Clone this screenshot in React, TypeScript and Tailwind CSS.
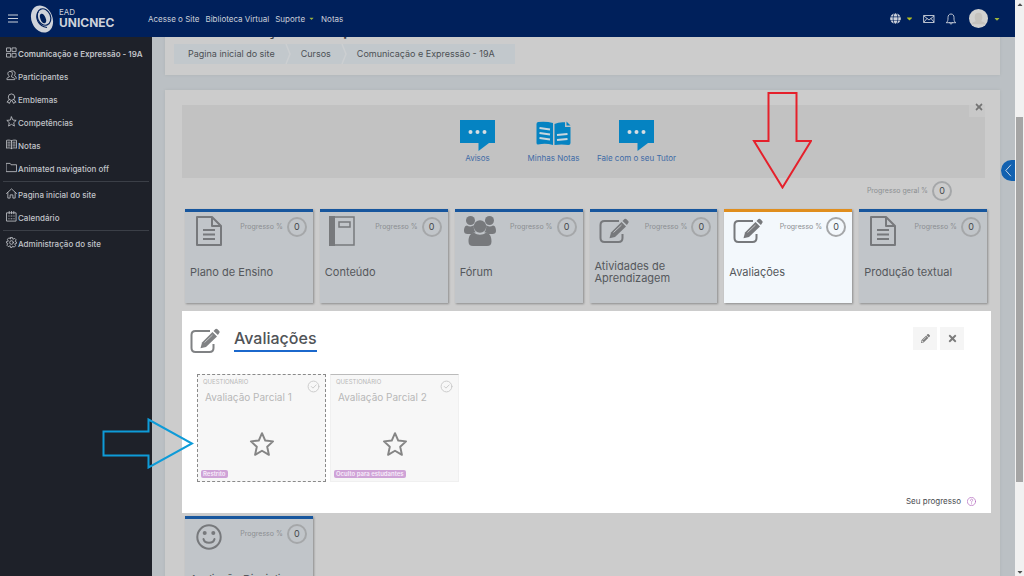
import type { ReactNode } from "react";
import { FaCaretDown, FaGlobe, FaPencilAlt, FaTimes } from "react-icons/fa";

// ================================
// Icons
// ================================

interface IconProps {
  className?: string;
  children: ReactNode;
}

function LineIcon({ className = "size-3", children }: IconProps) {
  return (
    <svg
      viewBox="0 0 24 24"
      className={`${className} shrink-0`}
      fill="none"
      stroke="currentColor"
      strokeWidth="1.8"
      strokeLinejoin="round"
      strokeLinecap="round"
      aria-hidden="true"
    >
      {children}
    </svg>
  );
}

const STAR = "M12 2l3 6.8 7.2.8-5.4 5 1.6 7.4-6.4-3.8L5.6 22l1.6-7.4-5.4-5L9 8.800z";

const sideIcons: Record<string, ReactNode> = {
  grid: <path d="M2 2h8v8H2zM14 2h8v8h-8zM2 14h8v8H2zM14 14h8v8h-8z" />,
  users: (
    <path d="M9 3c3 0 5 2 5 5 0 2-1 4-2 5v2l5 2c1 1 2 2 2 4H2c0-2 0-3 1-4l4-2v-2C5 12 4 10 4 8c0-3 2-5 5-5zM12 2c4-1 8 1 8 5 0 2-1 4-2 5l4 3v4" />
  ),
  badge: (
    <>
      <circle cx="12" cy="9" r="7" />
      <path d="M7 14l-5 6 4 0 1 3 4-6M17 14l5 6-4 0-1 3-4-6" />
    </>
  ),
  star: <path d={STAR} />,
  book: (
    <path d="M12 4C9 2 5 2 1 3v17c4-1 8-1 11 1 3-2 7-2 11-1V3c-4-1-8-1-11 1zM12 4v17M4 7h5M4 11h5M4 15h5M15 7h5M15 11h5M15 15h5" />
  ),
  folder: <path d="M1 3h8l2 3h12v15H1z" />,
  home: <path d="M1 12L12 2l11 10M4 10v12h5v-7h6v7h5V10" />,
  calendar: <path d="M2 4h20v18H2zM7 1v5M12 1v5M17 1v5M6 11h1M11 11h2M17 11h1M6 17h1M11 17h2M17 17h1" />,
  gear: (
    <>
      <circle cx="12" cy="12" r="4" />
      <path d="M10 1h4l1 4 4-2 3 3-2 4 3 1v3l-4 1 2 4-3 3-4-2-1 3h-3l-1-4-4 2-3-3 2-4-3-1v-3l4-1-2-4 3-3 4 2z" />
    </>
  ),
};

function DocIcon() {
  return (
    <svg viewBox="0 0 26 30" className="ml-[5px] h-[30px] w-[26px]" fill="none" stroke="currentColor" strokeWidth="2" aria-hidden="true">
      <path d="M1 1h15l9 9v19H1zM16 1v9h9" strokeLinejoin="round" />
      <path d="M7 14h12M7 18.500h12M7 23h12" />
    </svg>
  );
}

function NotebookIcon() {
  return (
    <svg viewBox="0 0 26 30" className="ml-[3px] h-[30px] w-[26px]" fill="none" stroke="currentColor" aria-hidden="true">
      <path d="M1 1h24v28H1z" strokeWidth="1.5" />
      <path d="M0 0h6v30H0z" fill="currentColor" stroke="none" />
      <path d="M10 6h11v5H10z" strokeWidth="1.5" />
    </svg>
  );
}

function GroupIcon() {
  return (
    <svg viewBox="0 0 32 30" className="ml-[3px] h-[30px] w-8" fill="currentColor" aria-hidden="true">
      <circle cx="6.500" cy="4.500" r="4.500" />
      <circle cx="25.500" cy="4.500" r="4.500" />
      <path d="M3 9.500c2 1.300 5 1.300 7-.2-.7 3 .3 5.500 1.800 7-1.500 0-3 .7-4 1.700H3.500C1.300 18 0 17 0 15c0-2.500.8-5.500 3-5.500zM29 9.500c-2 1.300-5 1.300-7-.2.7 3-.3 5.500-1.800 7 1.500 0 3 .7 4 1.700h4.300c2.200 0 3.500-1 3.500-3 0-2.500-.8-5.500-3-5.500z" />
      <circle cx="16" cy="10.500" r="6.200" />
      <path d="M10 16.800c3.500 2.500 8.500 2.500 12 0 4 .5 5.500 4 5.500 8.700 0 3-1.500 4.500-4.500 4.500H9c-3 0-4.500-1.500-4.500-4.500 0-4.700 1.500-8.200 5.500-8.700z" />
    </svg>
  );
}

function EditIcon() {
  return (
    <svg viewBox="0 0 30 26" className="ml-[3px] h-[26px] w-[30px]" fill="none" stroke="currentColor" aria-hidden="true">
      <path d="M20 3H5.500Q1.500 3 1.500 7v13q0 4 4 4h14q4 0 4-4v-4" strokeWidth="2" />
      <path d="M22.500 4l4.500 4.500L16 19l-5.500 1.300L12 14.500z" fill="currentColor" stroke="none" />
      <path d="M23.500 3l2-1.900q1-.8 2 .1l1.700 1.700q.9 1 0 2L27.900 7z" fill="currentColor" stroke="none" />
      <path d="M14.500 14.500l8-7.500" stroke="#d4d6d8" strokeWidth="0.8" />
    </svg>
  );
}

function SmileIcon() {
  return (
    <svg viewBox="0 0 26 30" className="ml-[5px] h-[30px] w-[26px]" fill="none" stroke="currentColor" strokeWidth="2" aria-hidden="true">
      <circle cx="13" cy="14" r="11.700" />
      <path d="M7.500 16c1 5 10 5 11 0" strokeLinecap="round" />
      <circle cx="8.700" cy="10" r="2" fill="currentColor" stroke="none" />
      <circle cx="17.300" cy="10" r="2" fill="currentColor" stroke="none" />
    </svg>
  );
}

function SpeechIcon() {
  return (
    <svg viewBox="0 0 35 31" className="h-[31px] w-[35px]" aria-hidden="true">
      <path d="M0 0h35v23h-6l-10.500 8v-8H0z" fill="#0583c2" />
      <g fill="#d6dde2">
        <circle cx="10.500" cy="12" r="2" />
        <circle cx="17.500" cy="12" r="2" />
        <circle cx="24.500" cy="12" r="2" />
      </g>
    </svg>
  );
}

function GradesIcon() {
  return (
    <svg viewBox="0 0 35 31" className="h-[31px] w-[35px]" aria-hidden="true">
      <path d="M2 2q8-1 15 1v22q-7-2-15-.500Q.5 24.500.500 23V4Q.5 2.300 2 2z" fill="#0583c2" />
      <path d="M18.500 4Q23 1.700 29 2.300V7h5.500v16q0 2-2 2-7-1-14 0z" fill="#0583c2" />
      <path d="M30.500 1.500l4 4h-4z" fill="#0583c2" />
      <path d="M3.500 8l10.500 1.500M3.500 13l10.500 1.500M3.500 18l10.500 1.500M21 15l10.500-1M21 20l10.500-1" stroke="#c9d6dd" strokeWidth="2" />
    </svg>
  );
}

function Logo() {
  return (
    <svg viewBox="0 0 24 28" className="h-7 w-6" aria-hidden="true">
      <ellipse cx="12" cy="14" rx="10.500" ry="14" transform="rotate(-22 12 14)" fill="#cfd3da" />
      <ellipse cx="14" cy="12" rx="6.500" ry="8.500" transform="rotate(-22 14 12)" fill="none" stroke="#00205b" strokeWidth="1.200" />
      <ellipse cx="13" cy="13.500" rx="2.600" ry="5" transform="rotate(-22 13 13.500)" fill="#00205b" />
      <path d="M8 7c-3 6 0 14 9 15.500" fill="none" stroke="#00205b" strokeWidth="1.200" />
    </svg>
  );
}

// ================================
// Header and sidebar
// ================================

function Header() {
  return (
    <header className="flex h-[37px] shrink-0 items-center bg-[#00205b] text-[8px] text-[#ccd1da]">
      <button className="ml-2 w-[22px]" aria-label="Menu">
        <svg viewBox="0 0 10 9" className="h-[9px] w-[10px]" stroke="currentColor" strokeWidth="1" aria-hidden="true">
          <path d="M0 1h10M0 4.500h10M0 8h10" />
        </svg>
      </button>
      <a href="#" className="flex w-[118px] items-center gap-[5px]">
        <Logo />
        <span className="flex flex-col">
          <span className="text-[8px] leading-[9px]">EAD</span>
          <span className="text-[12px] leading-[12px] font-bold">UNICNEC</span>
        </span>
      </a>
      <nav className="flex items-center gap-[6px] whitespace-nowrap">
        <a href="#">Acesse o Site</a>
        <a href="#">Biblioteca Virtual</a>
        <a href="#" className="flex items-center gap-[3px]">
          Suporte <FaCaretDown className="size-[7px] text-[#9db53c]" />
        </a>
        <a href="#">Notas</a>
      </nav>
      <div className="mr-[14px] ml-auto flex items-center">
        <button className="flex items-center gap-1" aria-label="Idioma">
          <FaGlobe className="size-[11px]" />
          <FaCaretDown className="size-[9px] text-[#b5c020]" />
        </button>
        <button className="ml-[9px]" aria-label="Mensagens">
          <LineIcon>
            <path d="M2 5h20v14H2zM2 6l10 8 10-8M2 18l6-7M22 18l-6-7" />
          </LineIcon>
        </button>
        <button className="ml-[10px]" aria-label="Notificações">
          <LineIcon>
            <path d="M3 19c3-2 3-5 3-10 0-4 2-7 6-7s6 3 6 7c0 5 0 8 3 10zM9 19c0 4 6 4 6 0" />
          </LineIcon>
        </button>
        <button className="ml-3 flex items-center gap-[5px]" aria-label="Menu do usuário">
          <svg viewBox="0 0 20 20" className="size-[19px]" aria-hidden="true">
            <circle cx="10" cy="10" r="10" fill="#d2d2d0" />
            <path d="M10 4c3 0 4 2 4 5 0 2-1 3-1 4 2 1 4 1 4 3H3c0-2 2-2 4-3 0-1-1-2-1-4 0-3 1-5 4-5z" fill="#c5c3be" />
          </svg>
          <FaCaretDown className="size-2 text-[#9db53c]" />
        </button>
      </div>
    </header>
  );
}

const sideGroups = [
  [
    { icon: "grid", label: "Comunicação e Expressão - 19A", active: true },
    { icon: "users", label: "Participantes" },
    { icon: "badge", label: "Emblemas" },
    { icon: "star", label: "Competências" },
    { icon: "book", label: "Notas" },
    { icon: "folder", label: "Animated navigation off" },
  ],
  [
    { icon: "home", label: "Pagina inicial do site" },
    { icon: "calendar", label: "Calendário" },
  ],
  [{ icon: "gear", label: "Administração do site" }],
];

function Sidebar() {
  return (
    <aside className="w-[152px] shrink-0 bg-[#1e2129] px-[3px] pt-[5px] text-[8px] text-[#c2c5ca]">
      {sideGroups.map((group, i) => (
        <ul key={i} className={i > 0 ? "mt-px border-t border-[#3b3f47] pt-px" : ""}>
          {group.map((item) => (
            <li key={item.label}>
              <a href="#" className="flex h-[23px] items-center gap-px px-[3px] whitespace-nowrap">
                <LineIcon className="mb-[3px] size-[11px]">{sideIcons[item.icon]}</LineIcon>
                <span className={item.active ? "font-semibold" : "font-medium"}>{item.label}</span>
              </a>
            </li>
          ))}
        </ul>
      ))}
    </aside>
  );
}

// ================================
// Course content
// ================================

const crumbs = ["Pagina inicial do site", "Cursos", "Comunicação e Expressão - 19A"];

function Breadcrumb() {
  return (
    <nav className="flex" aria-label="Trilha">
      <ol className="flex h-5 items-center bg-[#c2c8cc] pr-5 pl-[14px] text-[9px] text-[#4c5054]">
        {crumbs.map((crumb, i) => (
          <li key={crumb} className="flex items-center">
            {i > 0 && (
              <svg viewBox="0 0 6 20" className="mx-[10px] h-5 w-[6px]" fill="none" stroke="#cccfd1" strokeWidth="1.500" aria-hidden="true">
                <path d="M1 0l4 10-4 10" />
              </svg>
            )}
            <a href="#">{crumb}</a>
          </li>
        ))}
      </ol>
    </nav>
  );
}

function Progress({ label }: { label: string }) {
  return (
    <div className="flex items-center gap-1 text-[7px] whitespace-nowrap text-[#8b8e91]">
      {label}
      <span className="flex size-5 items-center justify-center rounded-full border-2 border-[#a5a7a9] text-[9px] text-[#45484b]">
        0
      </span>
    </div>
  );
}

interface TopicCardProps {
  title: string;
  icon: ReactNode;
  active?: boolean;
}

function TopicCard({ title, icon, active }: TopicCardProps) {
  return (
    <a
      href="#"
      className={`flex h-[94px] flex-col border-t-[3px] px-[5px] shadow-[1px_1px_2px_#8b8b8b] ${
        active ? "border-[#e08e1e] bg-[#f3f8fc]" : "border-[#17569d] bg-[#c1c5c9]"
      }`}
    >
      <div className="flex justify-between pt-[4px] text-[#77797c]">
        <div className="flex h-[30px] items-center pl-px">{icon}</div>
        <div className="pt-px pr-px">
          <Progress label="Progresso %" />
        </div>
      </div>
      <h3 className="flex h-[51px] items-center text-[11px] leading-[12px] text-[#55585c]">{title}</h3>
    </a>
  );
}

const topics: TopicCardProps[] = [
  { title: "Plano de Ensino", icon: <DocIcon /> },
  { title: "Conteúdo", icon: <NotebookIcon /> },
  { title: "Fórum", icon: <GroupIcon /> },
  { title: "Atividades de Aprendizagem", icon: <EditIcon /> },
  { title: "Avaliações", icon: <EditIcon />, active: true },
  { title: "Produção textual", icon: <DocIcon /> },
];

const activities = [
  { title: "Avaliação Parcial 1", tag: "Restrito", focused: true },
  { title: "Avaliação Parcial 2", tag: "Oculto para estudantes", focused: false },
];

function ActivityCard({ title, tag, focused }: (typeof activities)[number]) {
  return (
    <a
      href="#"
      className={`flex h-[108px] w-[129px] flex-col border bg-[#f7f7f7] px-[5px] ${
        focused ? "border-dashed border-[#8a8a8a]" : "border-[#f0f0f0] border-t-[#bbb]"
      }`}
    >
      <div className="flex justify-between text-[#b8b8b8]">
        <div>
          <p className="pt-[2px] text-[6px] leading-[10px]">QUESTIONÁRIO</p>
          <h4 className="pt-[3px] pl-[2px] text-[10px] leading-[15px] whitespace-nowrap">{title}</h4>
        </div>
        <LineIcon className="-ml-3 mt-[5px] size-[13px] text-[#cbcbcb]">
          <circle cx="12" cy="12" r="10" />
          <path d="M8 12l3 3 6-6" />
        </LineIcon>
      </div>
      <LineIcon className="mx-auto mt-[26px] size-[26px] text-[#858585]">
        <path d={STAR} />
      </LineIcon>
      <span className="mt-auto mb-[3px] -ml-[2px] self-start rounded-[2px] bg-[#cfa3d7] px-[2px] text-[6px] leading-[8px] font-semibold text-[#f8edfa]">
        {tag}
      </span>
    </a>
  );
}

function TopicPanel() {
  return (
    <section className="flex h-[202px] flex-col bg-white px-[15px] pt-4 pb-[6px]">
      <div className="-ml-[10px] flex items-start">
        <div className="pt-px text-[#808284]">
          <EditIcon />
        </div>
        <h2 className="ml-[14px] border-b-2 border-[#1b68cc] text-[16px] leading-[23px] font-medium text-[#505357]">
          Avaliações
        </h2>
        <div className="mr-3 ml-auto flex gap-[3px] text-[#7b7b7b]">
          <button className="flex h-[23px] w-6 items-center justify-center bg-[#f5f5f5]" aria-label="Editar">
            <FaPencilAlt className="size-[9px]" />
          </button>
          <button className="flex h-[23px] w-6 items-center justify-center bg-[#f5f5f5]" aria-label="Fechar">
            <FaTimes className="size-[11px]" />
          </button>
        </div>
      </div>
      <div className="mt-5 flex gap-1">
        {activities.map((activity) => (
          <ActivityCard key={activity.title} {...activity} />
        ))}
      </div>
      <div className="mt-auto flex items-center justify-end gap-[6px] text-[8px] text-[#494c50]">
        Seu progresso
        <button className="text-[#b266bd]" aria-label="Ajuda">
          <LineIcon className="size-[9px]">
            <circle cx="12" cy="12" r="11" />
            <path d="M9 9c0-5 7-4 6 0-.500 2-3 2-3 5M12 18v.500" />
          </LineIcon>
        </button>
      </div>
    </section>
  );
}

function Shortcuts() {
  return (
    <div className="mr-[6px] flex h-[73px] bg-[#c2c2c2] text-[8px] text-[#3f6ba6]">
      <nav className="flex flex-1 items-start justify-center pt-[15px] pr-[30px]">
        <a href="#" className="flex w-[70px] flex-col items-center gap-px">
          <SpeechIcon />
          Avisos
        </a>
        <a href="#" className="flex w-[82px] flex-col items-center gap-px">
          <GradesIcon />
          Minhas Notas
        </a>
        <a href="#" className="flex w-[84px] flex-col items-center gap-px whitespace-nowrap">
          <SpeechIcon />
          Fale com o seu Tutor
        </a>
      </nav>
      <button className="flex h-3 w-4 items-center justify-end bg-[#c8c8c8] pr-px pb-2 text-[#737373]" aria-label="Fechar">
        <FaTimes className="size-[10px]" />
      </button>
    </div>
  );
}

function Course() {
  return (
    <main className="relative flex min-w-0 flex-1 flex-col overflow-hidden bg-[#bbc0c4] pr-[15px] pl-[13px]">
      <section className="-mt-[18px] shrink-0 bg-[#cccccc] px-[9px] pb-[11px] shadow-[0_0_3px_#aeb2b5]">
        <h1 className="mb-[5px] text-[19px] leading-5 font-medium text-[#3c4044]">Comunicação e Expressão - 19A</h1>
        <Breadcrumb />
      </section>
      <section className="mt-[15px] flex-1 bg-[#cccccc] pt-[15px] pr-[9px] pl-[17px] shadow-[0_0_3px_#aeb2b5]">
        <Shortcuts />
        <div className="flex justify-end py-[3px] pr-[39px]">
          <Progress label="Progresso geral %" />
        </div>
        <div className="mt-[5px] mr-[4px] mb-2 ml-[3px] grid grid-cols-6 gap-[7px]">
          {topics.map((topic) => (
            <TopicCard key={topic.title} {...topic} />
          ))}
        </div>
        <TopicPanel />
        <div className="mt-[3px] mr-[4px] ml-[3px] grid grid-cols-6 gap-[7px]">
          <TopicCard title="Avaliação Disciplinar" icon={<SmileIcon />} />
        </div>
      </section>
      {/* Side drawer handle */}
      <button
        className="absolute top-[123px] right-0 flex h-[21px] w-[14px] items-center justify-center rounded-l-full bg-[#1261b0] text-[#cbd8e6]"
        aria-label="Abrir painel"
      >
        <LineIcon className="size-[13px]">
          <path d="M16 2L7 12l9 10" />
        </LineIcon>
      </button>
    </main>
  );
}

function Scrollbar() {
  return (
    <div className="flex w-[9px] shrink-0 flex-col items-center bg-[#f1f1f1]" aria-hidden="true">
      <FaCaretDown className="mt-px size-2 rotate-180 text-[#505050]" />
      <div className="mt-[108px] w-[7px] flex-[364] bg-[#a5a5a5]" />
      <div className="flex-[86]" />
      <FaCaretDown className="size-2 text-[#505050]" />
    </div>
  );
}

export default function App() {
  return (
    <div className="relative flex h-screen overflow-hidden font-['Inter',sans-serif] leading-[12px]">
      <div className="flex min-w-0 flex-1 flex-col">
        <Header />
        <div className="flex min-h-0 flex-1">
          <Sidebar />
          <Course />
        </div>
      </div>
      <Scrollbar />

      {/* Tutorial arrows */}
      <svg viewBox="0 0 60 98" className="pointer-events-none absolute top-[91px] left-[752px] h-[98px] w-[60px]" fill="none" stroke="#e5202b" strokeWidth="2" aria-hidden="true">
        <path d="M16.500 2h28v48h14.500L30.500 96.500 2 50h14.500z" />
      </svg>
      <svg viewBox="0 0 92 52" className="pointer-events-none absolute top-[417px] left-[102px] h-[52px] w-[92px]" fill="none" stroke="#0e9bd8" strokeWidth="2" aria-hidden="true">
        <path d="M1.500 14.500h45V2.500L90 26.500 46.500 50.500v-12h-45z" />
      </svg>
    </div>
  );
}
